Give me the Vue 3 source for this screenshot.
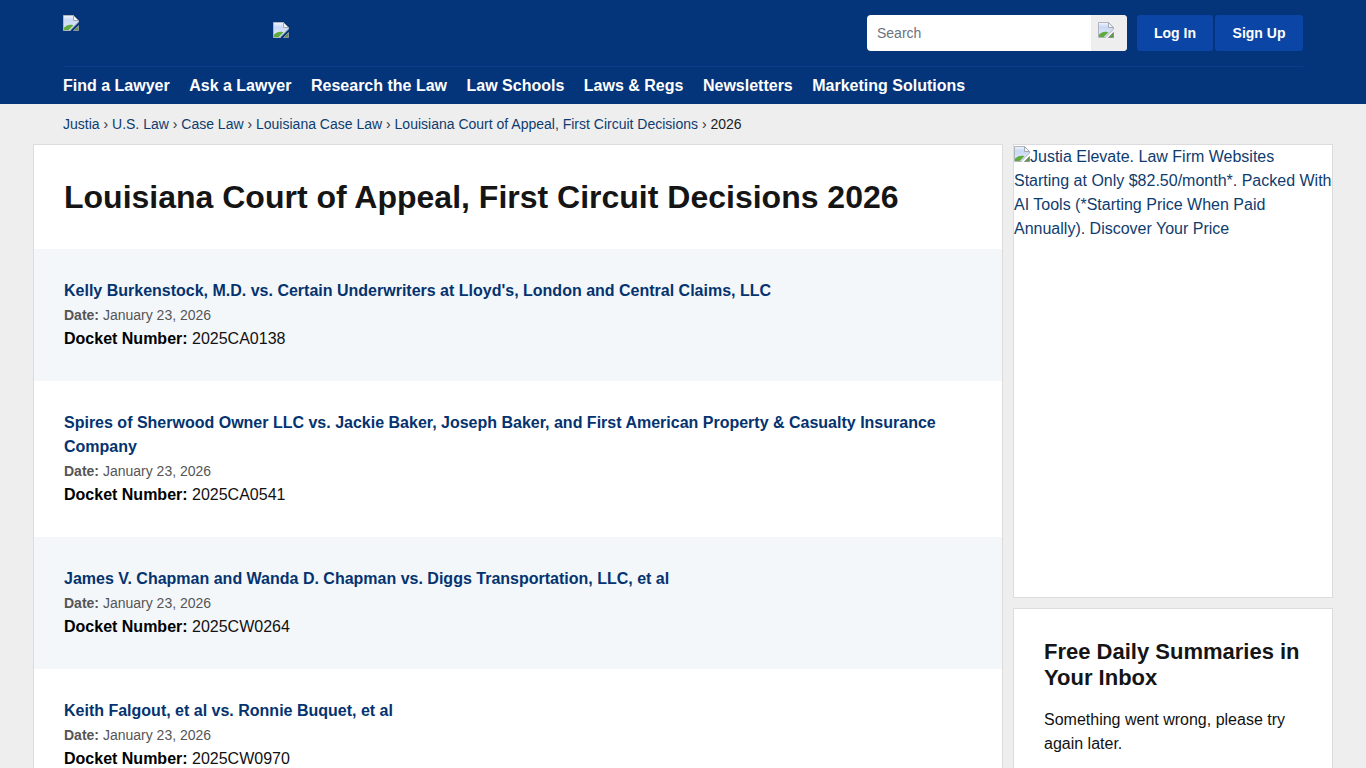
<script setup>
const nav = ['Find a Lawyer', 'Ask a Lawyer', 'Research the Law', 'Law Schools', 'Laws & Regs', 'Newsletters', 'Marketing Solutions']
const crumbs = ['Justia', 'U.S. Law', 'Case Law', 'Louisiana Case Law', 'Louisiana Court of Appeal, First Circuit Decisions']
const cases = [
  { title: "Kelly Burkenstock, M.D. vs. Certain Underwriters at Lloyd's, London and Central Claims, LLC", docket: '2025CA0138' },
  { title: 'Spires of Sherwood Owner LLC vs. Jackie Baker, Joseph Baker, and First American Property & Casualty Insurance Company', docket: '2025CA0541' },
  { title: 'James V. Chapman and Wanda D. Chapman vs. Diggs Transportation, LLC, et al', docket: '2025CW0264' },
  { title: 'Keith Falgout, et al vs. Ronnie Buquet, et al', docket: '2025CW0970' },
]
</script>

<template>
  <div class="page">
    <svg class="defs" width="0" height="0" aria-hidden="true">
      <defs>
        <linearGradient id="sky" x1="0" y1="0" x2="0" y2="1">
          <stop offset="0" stop-color="#f4f7fd" />
          <stop offset="0.3" stop-color="#c8d8f6" />
          <stop offset="1" stop-color="#e4ecfa" />
        </linearGradient>
      </defs>
      <symbol id="broken" viewBox="0 0 16 16">
        <path d="M0.5 0.5H10.5L15.5 5.5V7L7.5 15V15.5H0.5Z" fill="url(#sky)" stroke="#b0b4bb" />
        <path d="M10.5 0.5V5.5H15.5Z" fill="#f3f5f8" stroke="#a4a8b0" stroke-linejoin="round" />
        <path d="M1 15V12.6C3.4 10.2 6.5 9 10.4 10.2L5.8 15Z" fill="#5fab3e" />
        <path d="M15.5 10.5V15.5H10.5Z" fill="#5a9e3c" stroke="#8c9299" />
      </symbol>
    </svg>

    <header class="header">
      <div class="header-inner">
        <div class="top-row">
          <div class="logos">
            <svg class="broken"><use href="#broken" /></svg>
            <svg class="broken second"><use href="#broken" /></svg>
          </div>
          <div class="actions">
            <div class="search">
              <span class="search-input">Search</span>
              <span class="search-btn"><svg class="broken"><use href="#broken" /></svg></span>
            </div>
            <div class="buttons">
              <a class="btn login">Log In</a>
              <a class="btn signup">Sign Up</a>
            </div>
          </div>
        </div>
        <nav class="nav">
          <a v-for="n in nav" :key="n">{{ n }}</a>
        </nav>
      </div>
    </header>

    <div class="crumbs">
      <template v-for="c in crumbs" :key="c">
        <a>{{ c }}</a><span class="sep"> › </span>
      </template><span class="current">2026</span>
    </div>

    <div class="columns">
      <main class="main card">
        <h1 class="title">Louisiana Court of Appeal, First Circuit Decisions 2026</h1>
        <article v-for="c in cases" :key="c.docket" class="case">
          <a class="case-title">{{ c.title }}</a>
          <div class="date"><strong>Date:</strong> January 23, 2026</div>
          <div class="docket"><strong>Docket Number:</strong> {{ c.docket }}</div>
        </article>
      </main>
      <aside class="side">
        <div class="card ad">
          <a class="ad-link"><svg class="broken inline"><use href="#broken" /></svg>Justia Elevate. Law Firm Websites Starting at Only $82.50/month*. Packed With AI Tools (*Starting Price When Paid Annually). Discover Your Price</a>
        </div>
        <div class="card news">
          <h3>Free Daily Summaries in Your Inbox</h3>
          <p>Something went wrong, please try again later.</p>
        </div>
      </aside>
    </div>
  </div>
</template>

<style>
html, body { margin: 0; overflow: hidden; }
</style>

<style scoped>
.page {
  height: 768px;
  overflow: hidden;
  background: #eeeeee;
  font-family: "Liberation Sans", Arial, sans-serif;
  color: #111;
}
.defs { position: absolute; }
.broken { width: 16px; height: 16px; display: block; flex: none; }
.header { background: #04347a; height: 104px; box-sizing: border-box; padding: 0 63px; }
.header-inner { width: 1240px; }
.top-row { display: flex; justify-content: space-between; height: 67px; box-sizing: border-box; padding-top: 15px; border-bottom: 1px solid #0b3f8c; }
.logos { display: flex; align-items: flex-start; gap: 194px; }
.logos .second { margin-top: 7px; }
.actions { display: flex; gap: 10px; height: 36px; }
.search { display: flex; width: 260px; height: 36px; border-radius: 4px; overflow: hidden; background: #fff; }
.search-input { flex: 1; font-size: 14px; line-height: 36px; padding-left: 10px; color: #6b7280; }
.search-btn { width: 36px; background: #eeeeee; display: flex; justify-content: flex-start; padding: 7px 0 0 7px; box-sizing: border-box; }
.buttons { display: flex; gap: 2px; }
.btn { display: block; height: 36px; line-height: 36px; box-sizing: border-box; background: #0b45a5; color: #fff; font-weight: 700; font-size: 14px; text-align: center; border-radius: 3px; }
.login { width: 76px; }
.signup { width: 88px; }
.nav { display: flex; gap: 19.5px; height: 37px; align-items: center; }
.nav a { color: #fff; font-size: 16px; font-weight: 700; line-height: 37px; }
.crumbs { height: 40px; box-sizing: border-box; padding-left: 63px; font-size: 14px; line-height: 40px; white-space: pre-wrap; }
.crumbs a { color: #0f3c6e; }
.crumbs .sep { color: #333; }
.crumbs .current { color: #222; }
.columns { display: flex; align-items: flex-start; gap: 10px; padding-left: 33px; }
.card { background: #fff; border: 1px solid #dcdcdc; box-sizing: border-box; }
.main { width: 970px; }
.title { margin: 0; padding: 32px 30px 32px; font-size: 32px; line-height: 40px; font-weight: 700; color: #151515; height: 104px; box-sizing: border-box; }
.case { padding: 30px 30px 30px; }
.case:nth-of-type(odd) { background: #f4f7fa; }
.case-title { display: block; font-size: 16px; font-weight: 700; line-height: 24px; color: #04336f; }
.date { font-size: 14px; line-height: 22px; margin: 1px 0; color: #555; }
.date strong { color: #555; }
.docket { font-size: 16px; line-height: 24px; color: #111; }
.docket strong { color: #000; }
.side { width: 320px; display: flex; flex-direction: column; gap: 10px; }
.ad { height: 454px; }
.ad-link { font-size: 16px; line-height: 24px; color: #0f3c6e; display: block; }
.broken.inline { display: inline-block; }
.news { padding: 30px; height: 300px; }
.news h3 { margin: 0; font-size: 22px; line-height: 26px; font-weight: 700; color: #151515; }
.news p { margin: 17px 0 0; font-size: 16px; line-height: 24px; color: #111; }
</style>
